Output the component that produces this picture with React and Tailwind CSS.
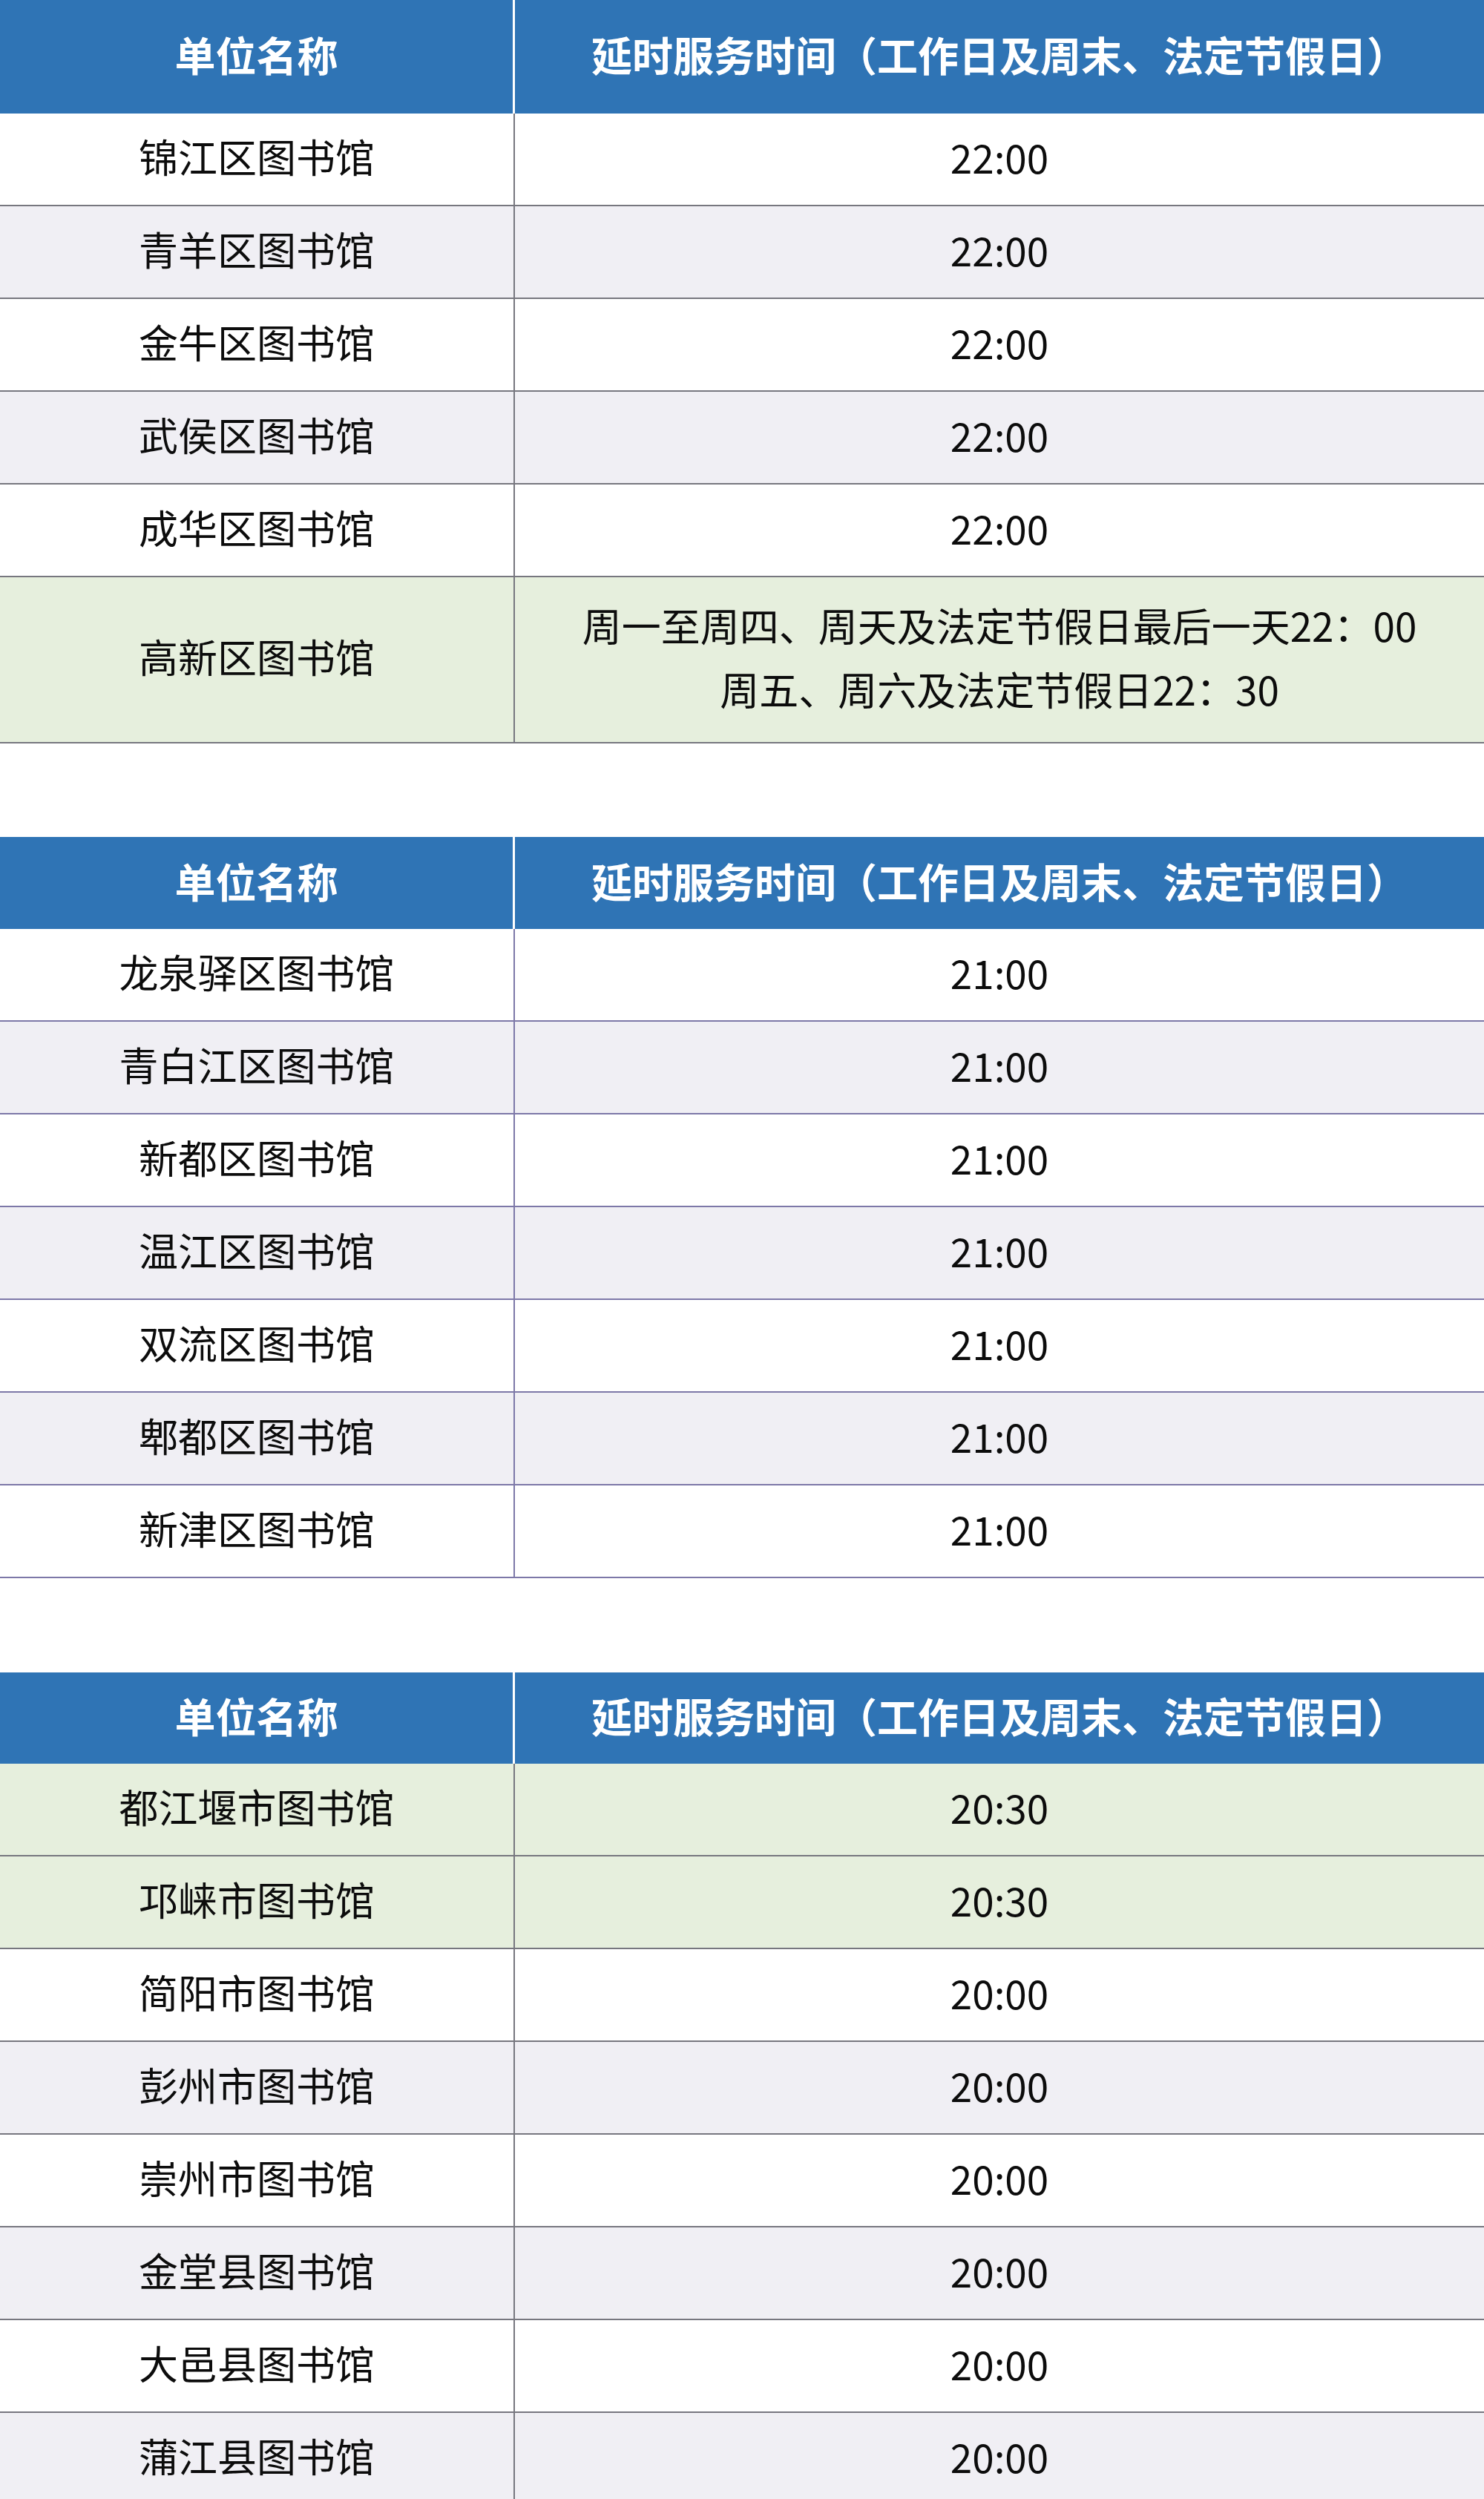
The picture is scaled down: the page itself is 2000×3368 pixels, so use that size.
const HEAD = "延时服务时间（工作日及周末、法定节假日）";

const table1 = [
  { name: "锦江区图书馆", time: "22:00", bg: "bg-white" },
  { name: "青羊区图书馆", time: "22:00", bg: "bg-[#f0eff4]" },
  { name: "金牛区图书馆", time: "22:00", bg: "bg-white" },
  { name: "武侯区图书馆", time: "22:00", bg: "bg-[#f0eff4]" },
  { name: "成华区图书馆", time: "22:00", bg: "bg-white" },
  {
    name: "高新区图书馆",
    time: ["周一至周四、周天及法定节假日最后一天22：00", "周五、周六及法定节假日22：30"],
    bg: "bg-[#e6efdd]",
    tall: true,
  },
];

const table2 = [
  { name: "龙泉驿区图书馆", time: "21:00", bg: "bg-white" },
  { name: "青白江区图书馆", time: "21:00", bg: "bg-[#f0eff4]" },
  { name: "新都区图书馆", time: "21:00", bg: "bg-white" },
  { name: "温江区图书馆", time: "21:00", bg: "bg-[#f0eff4]" },
  { name: "双流区图书馆", time: "21:00", bg: "bg-white" },
  { name: "郫都区图书馆", time: "21:00", bg: "bg-[#f0eff4]" },
  { name: "新津区图书馆", time: "21:00", bg: "bg-white" },
];

const table3 = [
  { name: "都江堰市图书馆", time: "20:30", bg: "bg-[#e6efdd]" },
  { name: "邛崃市图书馆", time: "20:30", bg: "bg-[#e6efdd]" },
  { name: "简阳市图书馆", time: "20:00", bg: "bg-white" },
  { name: "彭州市图书馆", time: "20:00", bg: "bg-[#f0eff4]" },
  { name: "崇州市图书馆", time: "20:00", bg: "bg-white" },
  { name: "金堂县图书馆", time: "20:00", bg: "bg-[#f0eff4]" },
  { name: "大邑县图书馆", time: "20:00", bg: "bg-white" },
  { name: "蒲江县图书馆", time: "20:00", bg: "bg-[#f0eff4]" },
];

function Row({ r, line }) {
  return (
    <div
      className={`grid grid-cols-[694px_1fr] border-b-2 ${line} ${r.bg} ${
        r.tall ? "h-[224px]" : "h-[125px]"
      }`}
    >
      <div className={`flex items-center justify-center pb-[8px] border-r-2 ${line}`}>{r.name}</div>
      <div className="flex flex-col items-center justify-center pb-[8px] leading-[86px]">
        {Array.isArray(r.time) ? r.time.map((t) => <div key={t}>{t}</div>) : r.time}
      </div>
    </div>
  );
}

function Table({ rows, headH, line }) {
  return (
    <div>
      <div
        className={`grid grid-cols-[694px_1fr] bg-[#2f74b5] text-white font-bold text-[55px] ${headH}`}
      >
        <div className="flex items-center justify-center pb-[8px] border-r-[3px] border-white">单位名称</div>
        <div className="flex items-center justify-center pb-[8px]">{HEAD}</div>
      </div>
      {rows.map((r) => (
        <Row key={r.name} r={r} line={line} />
      ))}
    </div>
  );
}

export default function App() {
  return (
    <div className="w-[2000px] h-[3368px] overflow-hidden bg-white text-[#0c0c0c] text-[53px] font-['Noto_Sans_CJK_SC','Noto_Sans',sans-serif]">
      <Table rows={table1} headH="h-[153px]" line="border-[#77777f]" />
      <div className="h-[126px]" />
      <Table rows={table2} headH="h-[124px]" line="border-[#7d78a8]" />
      <div className="h-[127px]" />
      <Table rows={table3} headH="h-[123px]" line="border-[#77777f]" />
    </div>
  );
}
